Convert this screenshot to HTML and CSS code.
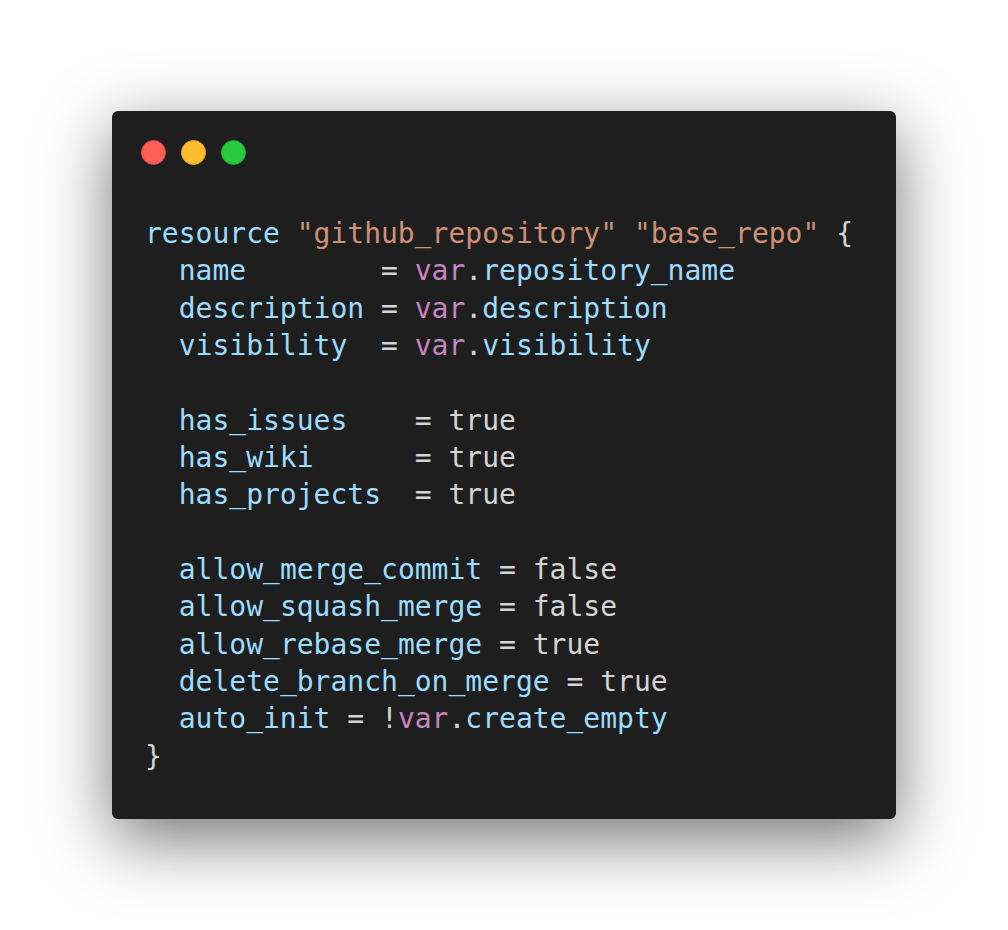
FILE: index.html
```html
<!DOCTYPE html>
<html>
<head>
<meta charset="utf-8">
<link rel="stylesheet" href="styles.css">
</head>
<body>
<div class="window">
  <div class="controls">
    <span class="dot red"></span>
    <span class="dot yellow"></span>
    <span class="dot green"></span>
  </div>
<pre class="code"><span class="k">resource</span> <span class="s">"github<span class="u">_</span>repository"</span> <span class="s">"base<span class="u">_</span>repo"</span> <span class="p">{</span>
  <span class="k">name</span>        <span class="p">=</span> <span class="v">var</span><span class="p">.</span><span class="k">repository<span class="u">_</span>name</span>
  <span class="k">description</span> <span class="p">=</span> <span class="v">var</span><span class="p">.</span><span class="k">description</span>
  <span class="k">visibility</span>  <span class="p">=</span> <span class="v">var</span><span class="p">.</span><span class="k">visibility</span>

  <span class="k">has<span class="u">_</span>issues</span>    <span class="p">= true</span>
  <span class="k">has<span class="u">_</span>wiki</span>      <span class="p">= true</span>
  <span class="k">has<span class="u">_</span>projects</span>  <span class="p">= true</span>

  <span class="k">allow<span class="u">_</span>merge<span class="u">_</span>commit</span> <span class="p">= false</span>
  <span class="k">allow<span class="u">_</span>squash<span class="u">_</span>merge</span> <span class="p">= false</span>
  <span class="k">allow<span class="u">_</span>rebase<span class="u">_</span>merge</span> <span class="p">= true</span>
  <span class="k">delete<span class="u">_</span>branch<span class="u">_</span>on<span class="u">_</span>merge</span> <span class="p">= true</span>
  <span class="k">auto<span class="u">_</span>init</span> <span class="p">= !</span><span class="v">var</span><span class="p">.</span><span class="k">create<span class="u">_</span>empty</span>
<span class="p">}</span></pre>
</div>
</body>
</html>
```

FILE: styles.css
```css
html, body {
  margin: 0;
  padding: 0;
  background: #ffffff;
}

body {
  padding: 111px 112px;
}

.window {
  box-sizing: border-box;
  width: 784px;
  height: 708px;
  background: #1e1e1e;
  border-radius: 6px;
  box-shadow: 0 20px 68px rgba(0, 0, 0, 0.55);
  padding: 29px 0 0 29px;
}

.controls {
  display: flex;
  gap: 15px;
  height: 25px;
}

.dot {
  display: block;
  width: 25px;
  height: 25px;
  border-radius: 50%;
  box-sizing: border-box;
}

.red { background: #ff5f56; border: 1px solid #e0443e; }
.yellow { background: #ffbd2e; border: 1px solid #dea123; }
.green { background: #27c93f; border: 1px solid #1aab29; }

.code {
  margin: 50px 0 0 4px;
  font-family: "DejaVu Sans Mono", monospace;
  font-size: 28px;
  line-height: 37.33px;
  color: #d4d4d4;
  white-space: pre;
}

.u {
  position: relative;
  top: -2px;
}

.k { color: #9cdcfe; }
.s { color: #ce9178; }
.v { color: #c586c0; }
.p { color: #d4d4d4; }
```
